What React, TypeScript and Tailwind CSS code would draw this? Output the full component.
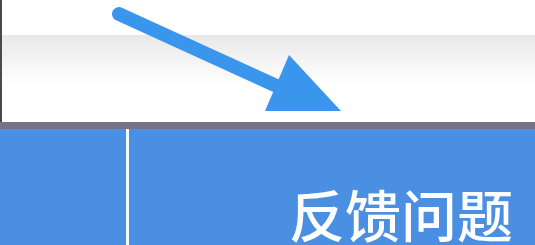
import React from "react";

export default function App() {
  return (
    <div className="w-[535px] h-[245px] overflow-hidden bg-white flex flex-col" style={{ fontFamily: '"Noto Sans CJK SC", "Noto Sans", sans-serif' }}>
      <div className="relative h-[122px] border-l-2 border-[#4a4a4a] flex flex-col">
        <div className="h-[35px] bg-white" />
        <div className="h-[50px] bg-gradient-to-b from-[#e8e8e8] to-white" />
        <div className="flex-1 bg-white" />
        <svg className="absolute left-0 top-0" width="535" height="122" viewBox="0 0 535 122">
          <line x1="117" y1="14" x2="290" y2="93" stroke="#3a95ec" strokeWidth="14" strokeLinecap="round" />
          <polygon points="263,111 339,111 287,55" fill="#3a95ec" />
        </svg>
      </div>
      <div className="h-[7px] bg-[#767289]" />
      <div className="flex-1 flex bg-[#4a8fe1]">
        <div className="w-[126px]" />
        <div className="w-[3px] bg-[#f4fbff]" />
        <div className="flex-1 flex justify-end items-end pr-[22px]">
          <span className="text-white text-[56px] font-medium leading-none mb-[4px]">反馈问题</span>
        </div>
      </div>
    </div>
  );
}
